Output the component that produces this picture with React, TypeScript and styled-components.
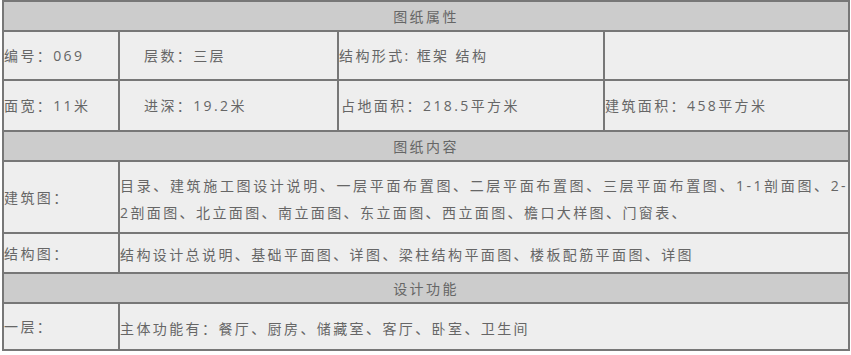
import React from "react";

import styled, { createGlobalStyle } from "styled-components";

type Field = {
    text: string,
    indent?: number,
};

type ContentRow = {
    label: string,
    lines: string[],
    height: number,
};

type Section = {
    title: string,
    rows: ContentRow[],
};

const attributes: Field[][] = [
    [
        { text: "编号：069" },
        { text: "层数：三层", indent: 24 },
        { text: "结构形式: 框架 结构" },
        { text: "" },
    ],
    [
        { text: "面宽：11米" },
        { text: "进深：19.2米", indent: 24 },
        { text: "占地面积：218.5平方米", indent: 2 },
        { text: "建筑面积：458平方米" },
    ],
];

const sections: Section[] = [
    {
        title: "图纸内容",
        rows: [
            {
                label: "建筑图：",
                lines: [
                    "目录、建筑施工图设计说明、一层平面布置图、二层平面布置图、三层平面布置图、1-1剖面图、2-",
                    "2剖面图、北立面图、南立面图、东立面图、西立面图、檐口大样图、门窗表、",
                ],
                height: 70,
            },
            {
                label: "结构图：",
                lines: ["结构设计总说明、基础平面图、详图、梁柱结构平面图、楼板配筋平面图、详图"],
                height: 38,
            },
        ],
    },
    {
        title: "设计功能",
        rows: [
            {
                label: "一层：",
                lines: ["主体功能有：餐厅、厨房、储藏室、客厅、卧室、卫生间"],
                height: 45,
            },
        ],
    },
];

const attributeHeights = [47, 49];

const App: React.FC = () => {
    const rowHeights = [28, ...attributeHeights];
    sections.forEach((s) => {
        rowHeights.push(28, ...s.rows.map((r) => r.height));
    });

    return (
        <>
            <GlobalStyle />
            <Page>
                <Sheet Rows={rowHeights.map((h) => `${h}px`).join(" ")}>
                    <HeaderCell>图纸属性</HeaderCell>
                    {attributes.map((row, i) => (
                        <React.Fragment key={i}>
                            {row.map((f, j) => (
                                <Cell key={j} Indent={f.indent ?? 0}>{f.text}</Cell>
                            ))}
                        </React.Fragment>
                    ))}
                    {sections.map((s) => (
                        <React.Fragment key={s.title}>
                            <HeaderCell>{s.title}</HeaderCell>
                            {s.rows.map((r) => (
                                <React.Fragment key={r.label}>
                                    <Cell Indent={0}>{r.label}</Cell>
                                    <WideCell>
                                        <Lines>
                                            {r.lines.map((line, k) => (
                                                <Line key={k} Justify={k < r.lines.length - 1}>{line}</Line>
                                            ))}
                                        </Lines>
                                    </WideCell>
                                </React.Fragment>
                            ))}
                        </React.Fragment>
                    ))}
                </Sheet>
            </Page>
        </>
    );
};

const GlobalStyle = createGlobalStyle`
    body {
        margin: 0;
        background: #ffffff;
        font-family: "Open Sans", "Noto Sans CJK SC", sans-serif;
    }
`;

const Page = styled.div`
    padding-left: 2px;
`;

type SheetProps = {
    Rows: string;
};

const Sheet = styled.div<SheetProps>`
    display: grid;
    width: 848px;
    box-sizing: border-box;
    grid-template-columns: 114px 217px 264px 243px;
    grid-template-rows: ${props => props.Rows};
    gap: 2px;
    padding: 2px;
    background: #777777;
    font-size: 14px;
    letter-spacing: 2.4px;
    color: #666666;
`;

const HeaderCell = styled.div`
    grid-column: 1 / -1;
    display: flex;
    align-items: center;
    justify-content: center;
    background: #cccccc;
    line-height: 27px;
`;

type CellProps = {
    Indent: number;
};

const Cell = styled.div<CellProps>`
    display: flex;
    align-items: center;
    padding-left: ${props => props.Indent}px;
    background: #eeeeee;
    line-height: 27px;
    white-space: nowrap;
`;

const WideCell = styled.div`
    grid-column: 2 / -1;
    display: flex;
    align-items: center;
    background: #eeeeee;
    line-height: 27px;
`;

const Lines = styled.div`
    flex: 1;
    padding-top: 3px;
`;

type LineProps = {
    Justify: boolean;
};

const Line = styled.div<LineProps>`
    white-space: nowrap;
    text-align: ${props => props.Justify ? "justify" : "left"};
    text-align-last: ${props => props.Justify ? "justify" : "left"};
    text-justify: inter-character;
`;

export default App;
